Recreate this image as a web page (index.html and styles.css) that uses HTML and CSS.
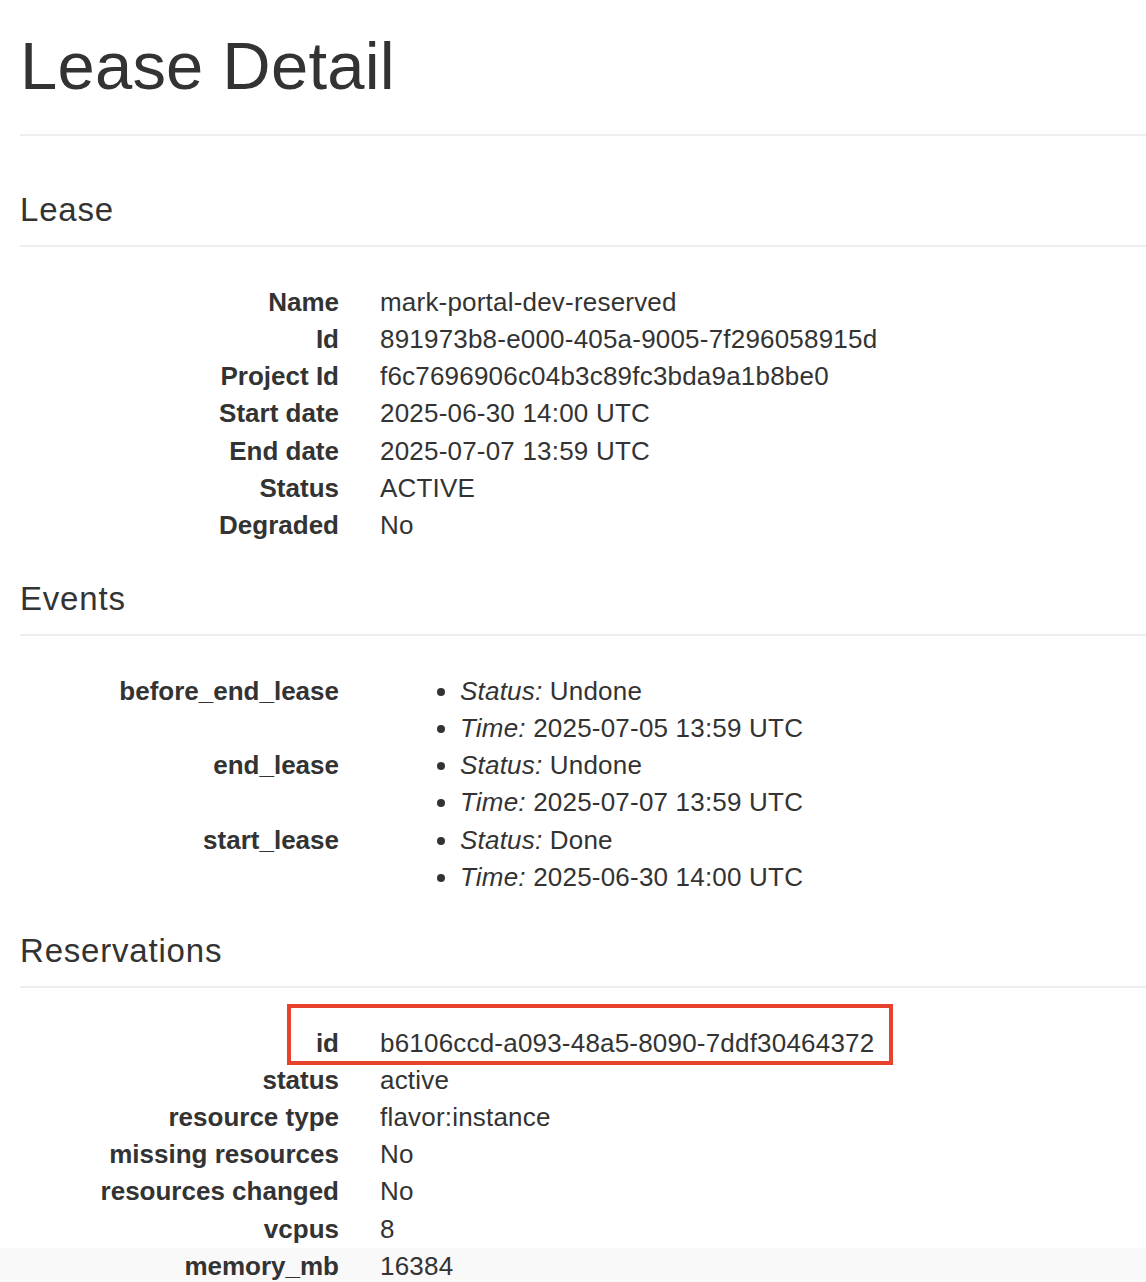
FILE: index.html
```html
<!DOCTYPE html>
<html lang="en">
<head>
<meta charset="utf-8">
<title>Lease Detail</title>
<link rel="stylesheet" href="styles.css">
</head>
<body>
<div class="page">
  <h1 class="page-title">Lease Detail</h1>

  <h2 class="section-title section-first">Lease</h2>
  <dl class="details">
    <div class="row"><dt>Name</dt><dd>mark-portal-dev-reserved</dd></div>
    <div class="row"><dt>Id</dt><dd>891973b8-e000-405a-9005-7f296058915d</dd></div>
    <div class="row"><dt>Project Id</dt><dd>f6c7696906c04b3c89fc3bda9a1b8be0</dd></div>
    <div class="row"><dt>Start date</dt><dd>2025-06-30 14:00 UTC</dd></div>
    <div class="row"><dt>End date</dt><dd>2025-07-07 13:59 UTC</dd></div>
    <div class="row"><dt>Status</dt><dd>ACTIVE</dd></div>
    <div class="row"><dt>Degraded</dt><dd>No</dd></div>
  </dl>

  <h2 class="section-title">Events</h2>
  <dl class="details">
    <div class="row">
      <dt>before_end_lease</dt>
      <dd>
        <ul class="event-list">
          <li><em>Status:</em> Undone</li>
          <li><em>Time:</em> 2025-07-05 13:59 UTC</li>
        </ul>
      </dd>
    </div>
    <div class="row">
      <dt>end_lease</dt>
      <dd>
        <ul class="event-list">
          <li><em>Status:</em> Undone</li>
          <li><em>Time:</em> 2025-07-07 13:59 UTC</li>
        </ul>
      </dd>
    </div>
    <div class="row">
      <dt>start_lease</dt>
      <dd>
        <ul class="event-list">
          <li><em>Status:</em> Done</li>
          <li><em>Time:</em> 2025-06-30 14:00 UTC</li>
        </ul>
      </dd>
    </div>
  </dl>

  <h2 class="section-title">Reservations</h2>
  <dl class="details">
    <div class="row highlighted"><dt>id</dt><dd>b6106ccd-a093-48a5-8090-7ddf30464372</dd></div>
    <div class="row"><dt>status</dt><dd>active</dd></div>
    <div class="row"><dt>resource type</dt><dd>flavor:instance</dd></div>
    <div class="row"><dt>missing resources</dt><dd>No</dd></div>
    <div class="row"><dt>resources changed</dt><dd>No</dd></div>
    <div class="row"><dt>vcpus</dt><dd>8</dd></div>
    <div class="row striped"><dt>memory_mb</dt><dd>16384</dd></div>
  </dl>
</div>
</body>
</html>
```

FILE: styles.css
```css
html {
  overflow: hidden;
}

body {
  margin: 0;
  font-family: "Liberation Sans", Arial, Helvetica, sans-serif;
  font-size: 26px;
  line-height: 37.14px;
  color: #333333;
  background: #ffffff;
}

.page {
  padding-left: 20px;
}

.page-title {
  margin: 26px 0 0;
  padding-bottom: 28px;
  font-size: 67px;
  line-height: 80px;
  font-weight: 400;
  letter-spacing: 0.2px;
  border-bottom: 2px solid #eeeeee;
}

.section-title {
  margin: 35px 0 0;
  padding-bottom: 15px;
  font-size: 33px;
  line-height: 40px;
  font-weight: 400;
  letter-spacing: 0.8px;
  border-bottom: 2px solid #eeeeee;
}

.section-first {
  margin-top: 54px;
}

.details {
  margin: 37px 0 0;
}

.row {
  display: grid;
  grid-template-columns: 319px 1fr;
  column-gap: 41px;
}

.row dt {
  text-align: right;
  font-weight: 700;
  white-space: nowrap;
}

.row dd {
  margin: 0;
  white-space: nowrap;
  letter-spacing: 0.2px;
}

.event-list {
  margin: 0;
  padding-left: 80px;
}

.event-list em {
  font-style: italic;
}

.striped {
  margin-left: -20px;
  padding-left: 20px;
  background: #f9f9f9;
}

.highlighted {
  position: relative;
}

.highlighted::after {
  content: "";
  position: absolute;
  top: -21px;
  left: 267px;
  width: 606px;
  height: 61px;
  box-sizing: border-box;
  border: 4.5px solid #e8412c;
  pointer-events: none;
}
```
